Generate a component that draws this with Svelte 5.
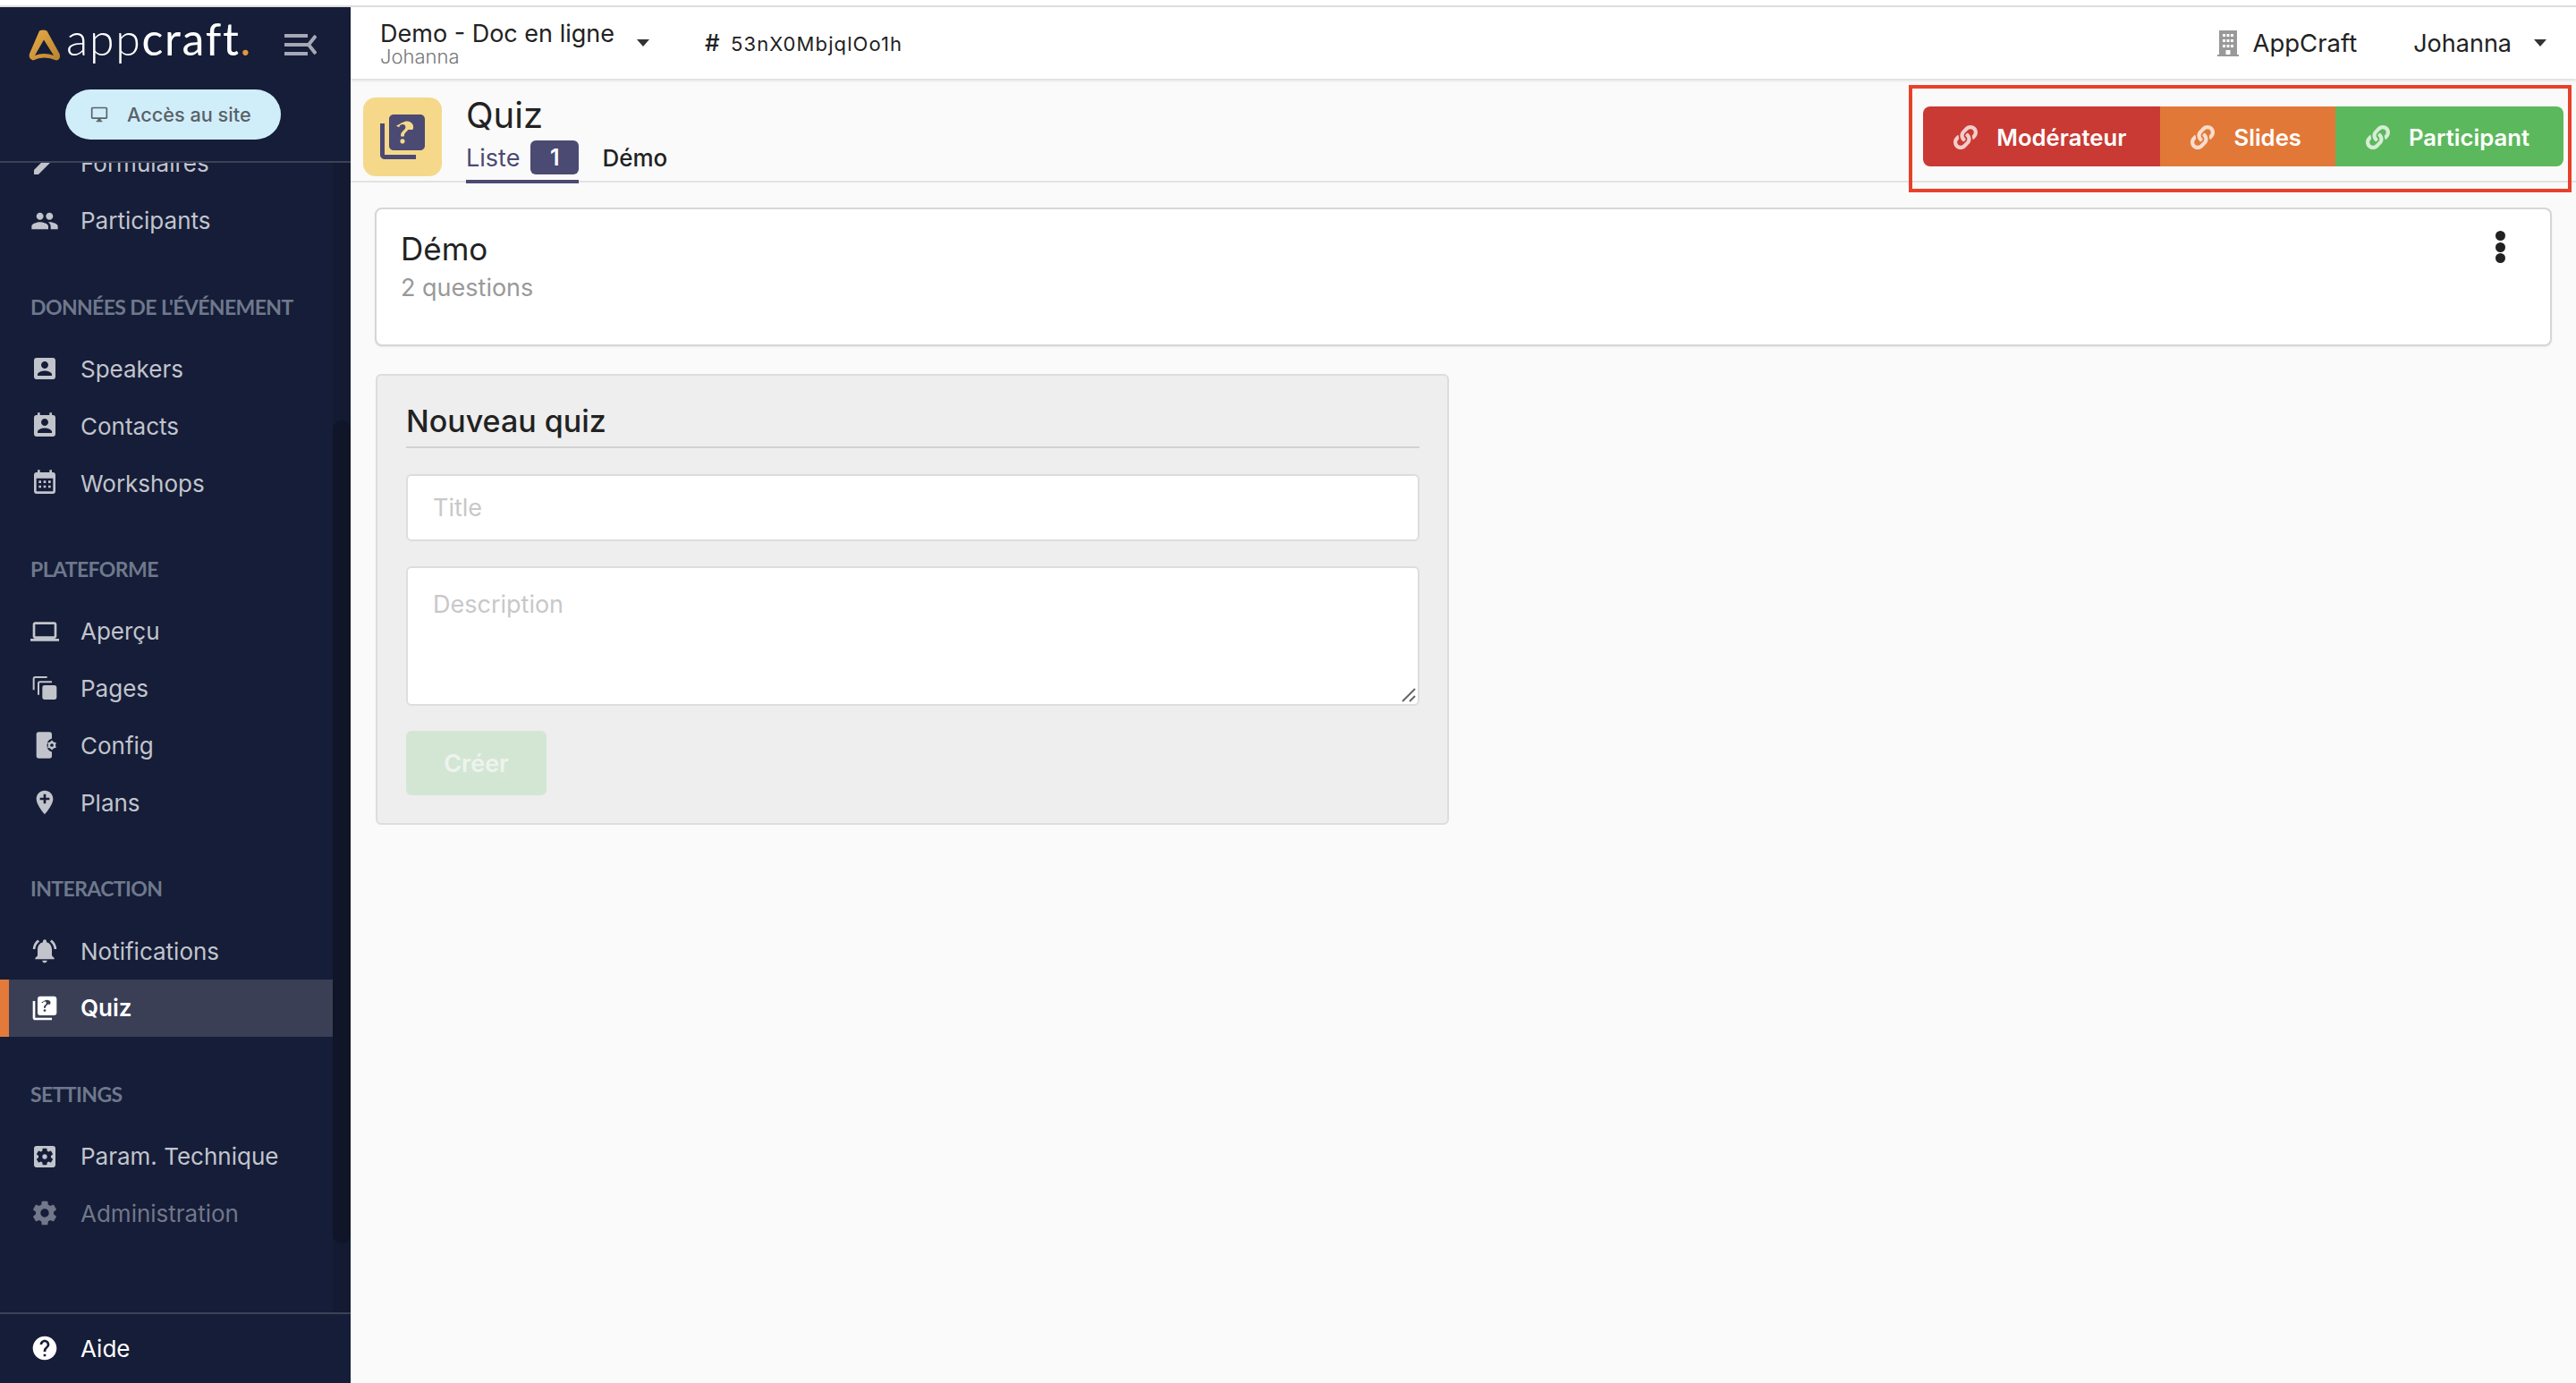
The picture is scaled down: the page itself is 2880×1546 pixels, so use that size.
<script>
  const icons = {
    pencil: 'M3 17.25V21h3.75L17.81 9.94l-3.75-3.75L3 17.25zM20.71 7.04a1 1 0 0 0 0-1.41l-2.34-2.34a1 1 0 0 0-1.41 0l-1.83 1.83 3.75 3.75 1.83-1.83z',
    people: 'M16 11c1.66 0 2.99-1.34 2.99-3S17.66 5 16 5c-1.66 0-3 1.34-3 3s1.34 3 3 3zm-8 0c1.66 0 2.99-1.34 2.99-3S9.66 5 8 5C6.34 5 5 6.34 5 8s1.34 3 3 3zm0 2c-2.33 0-7 1.17-7 3.5V19h14v-2.5c0-2.33-4.67-3.5-7-3.5zm8 0c-.29 0-.62.02-.97.05 1.16.84 1.97 1.97 1.97 3.45V19h6v-2.5c0-2.33-4.67-3.5-7-3.5z',
    box: 'M3 5v14c0 1.1.89 2 2 2h14c1.1 0 2-.9 2-2V5c0-1.1-.9-2-2-2H5c-1.11 0-2 .9-2 2zm12 4c0 1.66-1.34 3-3 3s-3-1.34-3-3 1.34-3 3-3 3 1.34 3 3zm-9 8c0-2 4-3.1 6-3.1s6 1.1 6 3.1v1H6v-1z',
    contact: 'M19 3h-1V1h-2v2H8V1H6v2H5c-1.11 0-2 .9-2 2v14c0 1.1.89 2 2 2h14c1.1 0 2-.9 2-2V5c0-1.1-.9-2-2-2zm-7 3c1.66 0 3 1.34 3 3s-1.34 3-3 3-3-1.34-3-3 1.34-3 3-3zm6 12H6v-1c0-2 4-3.1 6-3.1s6 1.1 6 3.1v1z',
    calendar: 'M19 3h-1V1h-2v2H8V1H6v2H5c-1.11 0-2 .9-2 2v14c0 1.1.89 2 2 2h14c1.1 0 2-.9 2-2V5c0-1.1-.9-2-2-2zm0 16H5V8h14v11zM7 10h2v2H7zm4 0h2v2h-2zm4 0h2v2h-2zm-8 4h2v2H7zm4 0h2v2h-2zm4 0h2v2h-2z',
    laptop: 'M20 18c1.1 0 1.99-.9 1.99-2L22 6c0-1.1-.9-2-2-2H4c-1.1 0-2 .9-2 2v10c0 1.1.9 2 2 2H0v2h24v-2h-4zM4 6h16v10H4V6z',
    pages: 'M2 13V3.5A2 2 0 0 1 4 1.5h10V3H4a.5.5 0 0 0-.5.5V13zM6 17V7.5A2 2 0 0 1 8 5.5h10V7H8a.5.5 0 0 0-.5.5V17zM12 9h8a2 2 0 0 1 2 2v8a2 2 0 0 1-2 2h-8a2 2 0 0 1-2-2v-8a2 2 0 0 1 2-2z',
    config: 'M7 1h9a2 2 0 0 1 2 2v3.3a6 6 0 0 0 0 11.4V21a2 2 0 0 1-2 2H7a2 2 0 0 1-2-2V3a2 2 0 0 1 2-2zM18 7.8L19.5 9.4 21.64 9.9 21 12 21.64 14.1 19.5 14.6 18 16.2 16.5 14.6 14.36 14.1 15 12 14.36 9.9 16.5 9.4zM18 10.6a1.4 1.4 0 1 0 0 2.8 1.4 1.4 0 0 0 0-2.8z',
    pin: 'M12 2C8.14 2 5 5.14 5 9c0 5.25 7 13 7 13s7-7.75 7-13c0-3.86-3.14-7-7-7zm4 8h-3v3h-2v-3H8V8h3V5h2v3h3v2z',
    bell: 'M7.58 4.08L6.15 2.65C3.75 4.48 2.17 7.3 2.03 10.5h2c.15-2.65 1.51-4.97 3.55-6.42zm12.39 6.42h2c-.15-3.2-1.73-6.02-4.12-7.85l-1.42 1.43c2.02 1.45 3.39 3.77 3.54 6.42zM18 11c0-3.07-1.64-5.64-4.5-6.32V4c0-.83-.67-1.5-1.5-1.5s-1.5.67-1.5 1.5v.68C7.63 5.36 6 7.92 6 11v5l-2 2v1h16v-1l-2-2v-5zm-6 11c.14 0 .27-.01.4-.04.65-.14 1.18-.58 1.44-1.18.1-.24.15-.5.15-.78h-4c.01 1.1.9 2 2.01 2z',
    quiz: 'M4 6H2v14c0 1.1.9 2 2 2h14v-2H4V6zm16-4H8c-1.1 0-2 .9-2 2v12c0 1.1.9 2 2 2h12c1.1 0 2-.9 2-2V4c0-1.1-.9-2-2-2zm-7.99 13c-.59 0-1.05-.47-1.05-1.05 0-.59.47-1.04 1.05-1.04.59 0 1.04.45 1.04 1.04-.01.58-.45 1.05-1.04 1.05zm2.5-6.17c-.63.93-1.23 1.21-1.56 1.81-.13.24-.18.4-.18 1.18h-1.52c0-.41-.06-1.08.26-1.65.41-.73 1.18-1.16 1.63-1.8.48-.68.21-1.94-1.14-1.94-.88 0-1.32.67-1.5 1.23l-1.37-.57C11.51 5.96 12.52 5 13.99 5c1.23 0 2.08.56 2.51 1.26.37.61.58 1.73.01 2.57z',
    tech: 'M19 3H5c-1.11 0-2 .89-2 2v14c0 1.11.89 2 2 2h14c1.11 0 2-.89 2-2V5c0-1.11-.89-2-2-2zm-1.75 9c0 .23-.02.46-.05.68l1.48 1.16c.13.11.17.3.08.45l-1.4 2.42c-.09.15-.27.21-.43.15l-1.74-.7c-.36.28-.76.51-1.18.69l-.26 1.85c-.03.17-.18.3-.35.3h-2.8c-.17 0-.32-.13-.35-.29l-.26-1.85c-.43-.18-.82-.41-1.18-.69l-1.74.7c-.16.06-.34 0-.43-.15l-1.4-2.42c-.09-.15-.05-.34.08-.45l1.48-1.16c-.03-.23-.05-.46-.05-.69 0-.23.02-.46.05-.68l-1.48-1.16c-.13-.11-.17-.3-.08-.45l1.4-2.42c.09-.15.27-.21.43-.15l1.74.7c.36-.28.76-.51 1.18-.69l.26-1.85c.03-.17.18-.3.35-.3h2.8c.17 0 .32.13.35.29l.26 1.85c.43.18.82.41 1.18.69l1.74-.7c.16-.06.34 0 .43.15l1.4 2.42c.09.15.05.34-.08.45l-1.48 1.16c.03.23.05.46.05.69zM12 10a2 2 0 1 0 0 4 2 2 0 0 0 0-4z',
    gear: 'M19.43 12.98c.04-.32.07-.64.07-.98s-.03-.66-.07-.98l2.11-1.65c.19-.15.24-.42.12-.64l-2-3.46c-.12-.22-.39-.3-.61-.22l-2.49 1c-.52-.4-1.08-.73-1.69-.98l-.38-2.65C14.46 2.18 14.25 2 14 2h-4c-.25 0-.46.18-.49.42l-.38 2.65c-.61.25-1.17.59-1.69.98l-2.49-1c-.23-.09-.49 0-.61.22l-2 3.46c-.13.22-.07.49.12.64l2.11 1.65c-.04.32-.07.65-.07.98s.03.66.07.98l-2.11 1.65c-.19.15-.24.42-.12.64l2 3.46c.12.22.39.3.61.22l2.49-1c.52.4 1.08.73 1.69.98l.38 2.65c.03.24.24.42.49.42h4c.25 0 .46-.18.49-.42l.38-2.65c.61-.25 1.17-.59 1.69-.98l2.49 1c.23.09.49 0 .61-.22l2-3.46c.12-.22.07-.49-.12-.64l-2.11-1.65zM12 15.5c-1.93 0-3.5-1.57-3.5-3.5s1.57-3.5 3.5-3.5 3.5 1.57 3.5 3.5-1.57 3.5-3.5 3.5z',
    help: 'M12 2C6.48 2 2 6.48 2 12s4.48 10 10 10 10-4.48 10-10S17.52 2 12 2zm1 17h-2v-2h2v2zm2.07-7.75l-.9.92C13.45 12.9 13 13.5 13 15h-2v-.5c0-1.1.45-2.1 1.17-2.83l1.24-1.26c.37-.36.59-.86.59-1.41 0-1.1-.9-2-2-2s-2 .9-2 2H8c0-2.21 1.79-4 4-4s4 1.79 4 4c0 .88-.36 1.68-.93 2.25z'
  };

  const linkPath = 'M326.612 185.391c59.747 59.809 58.927 155.698.36 214.59-.11.12-.24.25-.36.37l-67.2 67.2c-59.27 59.27-155.699 59.262-214.96 0-59.27-59.26-59.27-155.7 0-214.96l37.106-37.106c9.84-9.84 26.786-3.3 27.294 10.606.648 17.722 3.826 35.527 9.69 52.721 1.986 5.822.567 12.262-3.783 16.612l-13.087 13.087c-28.026 28.026-28.905 73.66-1.155 101.96 28.024 28.579 74.086 28.749 102.325.51l67.2-67.19c28.191-28.191 28.073-73.757 0-101.83-3.701-3.694-7.429-6.564-10.341-8.569a16.037 16.037 0 0 1-6.947-12.606c-.396-10.567 3.348-21.456 11.698-29.806l21.054-21.055c5.521-5.521 14.182-6.199 20.584-1.731a152.482 152.482 0 0 1 20.522 17.197zM467.547 44.449c-59.261-59.262-155.69-59.27-214.96 0l-67.2 67.2c-.12.12-.25.25-.36.37-58.566 58.892-59.387 154.781.36 214.59a152.454 152.454 0 0 0 20.521 17.196c6.402 4.468 15.064 3.789 20.584-1.731l21.054-21.055c8.35-8.35 12.094-19.239 11.698-29.806a16.037 16.037 0 0 0-6.947-12.606c-2.912-2.005-6.64-4.875-10.341-8.569-28.073-28.073-28.191-73.639 0-101.83l67.2-67.19c28.239-28.239 74.3-28.069 102.325.51 27.75 28.3 26.872 73.934-1.155 101.96l-13.087 13.087c-4.35 4.35-5.769 10.79-3.783 16.612 5.864 17.194 9.042 34.999 9.69 52.721.509 13.906 17.454 20.446 27.294 10.606l37.106-37.106c59.271-59.259 59.271-155.699.001-214.959z';

  const groups = [
    { items: [{ icon: 'pencil', label: 'Formulaires' }, { icon: 'people', label: 'Participants' }] },
    { title: "Données de l'événement", items: [{ icon: 'box', label: 'Speakers' }, { icon: 'contact', label: 'Contacts' }, { icon: 'calendar', label: 'Workshops' }] },
    { title: 'Plateforme', items: [{ icon: 'laptop', label: 'Aperçu' }, { icon: 'pages', label: 'Pages' }, { icon: 'config', label: 'Config' }, { icon: 'pin', label: 'Plans' }] },
    { title: 'Interaction', items: [{ icon: 'bell', label: 'Notifications' }, { icon: 'quiz', label: 'Quiz', active: true }] },
    { title: 'Settings', items: [{ icon: 'tech', label: 'Param. Technique' }, { icon: 'gear', label: 'Administration', muted: true }] }
  ];

  const links = [
    { label: 'Modérateur', color: 'red' },
    { label: 'Slides', color: 'orange' },
    { label: 'Participant', color: 'green' }
  ];
</script>

<div class="page">
  <aside class="sidebar">
    <div class="side-head">
      <div class="brand">
        <svg class="logo-mark" viewBox="0 0 36 36">
          <defs>
            <linearGradient id="gold" x1="0" y1="0" x2="1" y2="1">
              <stop offset="0" stop-color="#e8ac48" />
              <stop offset="1" stop-color="#b98330" />
            </linearGradient>
          </defs>
          <path fill="url(#gold)" fill-rule="evenodd" d="M12 1.5Q16 -.5 20.5 1.5L34.5 27Q36.5 33 31 34.5Q24 31.5 17.5 31.5Q11 31.5 5 34.5Q-.5 33 1 27zM17 11.5L7 29Q12 27 17.5 27Q23 27 28 29z" />
        </svg>
        <span class="wordmark"><span class="thin">app</span>craft<span class="dot">.</span></span>
        <svg class="collapse" viewBox="0 0 36 24" fill="#a6a8b6">
          <rect y="0" width="26" height="4" />
          <rect y="10" width="26" height="4" />
          <rect y="20" width="26" height="4" />
          <path d="M35 2 L27 12 L35 22" fill="none" stroke="#a6a8b6" stroke-width="4" />
        </svg>
      </div>
      <button class="site-btn">
        <svg viewBox="0 0 24 24"><path d="M21 2H3c-1.1 0-2 .9-2 2v12c0 1.1.9 2 2 2h7v2H8v2h8v-2h-2v-2h7c1.1 0 2-.9 2-2V4c0-1.1-.9-2-2-2zm0 14H3V4h18v12z" /></svg>
        Accès au site
      </button>
    </div>

    <nav class="nav">
      <div class="scroll">
        {#each groups as group}
          <section class="group">
            {#if group.title}<h3>{group.title}</h3>{/if}
            {#each group.items as item}
              <a class="item" class:active={item.active} class:muted={item.muted} href="#/">
                <svg viewBox="0 0 24 24"><path fill-rule="evenodd" d={icons[item.icon]} /></svg>
                <span>{item.label}</span>
              </a>
            {/each}
          </section>
        {/each}
      </div>
      <div class="track"><div class="thumb"></div></div>
    </nav>

    <div class="side-foot">
      <a class="item help" href="#/">
        <svg viewBox="0 0 24 24"><path d={icons.help} /></svg>
        <span>Aide</span>
      </a>
    </div>
  </aside>

  <main class="main">
    <header class="topbar">
      <div class="project">
        <div class="project-name">Demo - Doc en ligne</div>
        <div class="project-owner">Johanna</div>
      </div>
      <span class="caret first"></span>
      <div class="hash"><b>#</b> 53nX0MbjqlOo1h</div>
      <div class="spacer"></div>
      <svg class="building" viewBox="0 0 24 29" fill="#999">
        <path fill-rule="evenodd" d="M2 0h20v27h2v2H0v-2h2zM6 4v3h3V4zm4.5 0v3h3V4zM15 4v3h3V4zM6 10v3h3v-3zm4.5 0v3h3v-3zM15 10v3h3v-3zM6 16v3h3v-3zm4.5 0v3h3v-3zM15 16v3h3v-3zM9.5 22v5h5v-5z" />
      </svg>
      <span class="org">AppCraft</span>
      <span class="user">Johanna</span>
      <span class="caret"></span>
    </header>

    <div class="subhead">
      <div class="tile">
        <svg viewBox="0 0 24 24"><path d={icons.quiz} /></svg>
      </div>
      <div class="heading">
        <h1>Quiz</h1>
        <div class="tabs">
          <div class="tab current">Liste <span class="badge">1</span></div>
          <div class="tab">Démo</div>
        </div>
      </div>
      <div class="links">
        {#each links as link}
          <button class="link {link.color}">
            <svg viewBox="0 0 512 512"><path d={linkPath} /></svg>
            {link.label}
          </button>
        {/each}
      </div>
      <div class="highlight"></div>
    </div>

    <div class="content">
      <div class="card">
        <div>
          <div class="card-title">Démo</div>
          <div class="card-sub">2 questions</div>
        </div>
        <div class="dots"><i></i><i></i><i></i></div>
      </div>

      <form class="new-quiz">
        <h2>Nouveau quiz</h2>
        <input placeholder="Title" />
        <div class="area">
          <textarea placeholder="Description"></textarea>
          <svg class="grip" viewBox="0 0 16 16" stroke="#666" stroke-width="2" fill="none">
            <path d="M1 15 15 1M9 15l6-6" />
          </svg>
        </div>
        <button type="button" disabled>Créer</button>
      </form>
    </div>
  </main>
</div>

<style>
  :global(body) {
    margin: 0;
    background: #fff;
  }

  .page {
    display: flex;
    height: 1538px;
    border-top: 2px solid #ddd;
    margin-top: 6px;
    font-family: Inter, "Noto Sans", sans-serif;
    color: #222;
    overflow: hidden;
  }

  .sidebar {
    width: 392px;
    flex: none;
    display: flex;
    flex-direction: column;
    background: #151d38;
    color: #c2c4cc;
  }

  .side-head {
    height: 172px;
    flex: none;
    border-bottom: 2px solid #3b4257;
  }

  .brand {
    display: flex;
    align-items: center;
    height: 62px;
    padding: 12px 38px 0 32px;
  }

  .logo-mark {
    width: 36px;
    height: 36px;
    flex: none;
  }

  .wordmark {
    font-family: Lato, sans-serif;
    font-size: 50px;
    font-weight: 400;
    line-height: 62px;
    color: #fff;
    margin: -16px 0 0 6px;
    letter-spacing: 1.7px;
  }

  .thin {
    font-weight: 300;
  }

  .dot {
    color: #e8963a;
  }

  .collapse {
    width: 36px;
    height: 24px;
    margin-left: auto;
    margin-top: -2px;
  }

  .site-btn {
    display: flex;
    align-items: center;
    gap: 21px;
    width: 241px;
    height: 56px;
    margin: 18px 0 0 73px;
    padding: 0 0 0 28px;
    border: none;
    border-radius: 28px;
    background: #d0eefa;
    color: #5a6268;
    font: 500 21.7px Inter, sans-serif;
  }

  .site-btn svg {
    width: 20px;
    height: 20px;
    fill: #5a6268;
  }

  .nav {
    flex: 1;
    position: relative;
    overflow: hidden;
  }

  .scroll {
    margin-top: -31px;
    width: 372px;
  }

  .track {
    position: absolute;
    top: 0;
    right: 0;
    bottom: 0;
    width: 20px;
    background: #131a32;
  }

  .thumb {
    margin-top: 288px;
    height: 920px;
    border-radius: 10px;
    background: #101527;
  }

  .group h3 {
    margin: 48px 0 22px 34px;
    height: 32px;
    font: 700 23px/32px Lato, sans-serif;
    letter-spacing: -0.6px;
    text-transform: uppercase;
    color: #6f788c;
  }

  .group:first-child h3 {
    margin-top: 0;
  }

  .item {
    display: flex;
    align-items: center;
    gap: 24px;
    height: 63.8px;
    padding-left: 34px;
    color: inherit;
    text-decoration: none;
    font-size: 26px;
  }

  .item svg {
    width: 32px;
    height: 32px;
    fill: currentColor;
    flex: none;
  }

  .item.active {
    padding-left: 24px;
    border-left: 10px solid #e47a39;
    background: #3a3f56;
    color: #fff;
    font-weight: 600;
  }

  .item.muted {
    color: #72778a;
  }

  .side-foot {
    flex: none;
    height: 77px;
    border-top: 2px solid #3b4257;
    display: flex;
    align-items: center;
  }

  .item.help {
    color: #fff;
    width: 100%;
  }

  .main {
    flex: 1;
    min-width: 0;
    background: #fafafa;
    display: flex;
    flex-direction: column;
  }

  .topbar {
    height: 80px;
    flex: none;
    display: flex;
    align-items: center;
    padding-left: 33px;
    background: #fff;
    box-shadow: 0 2px 3px rgba(0, 0, 0, 0.12);
    position: relative;
  }

  .project-name {
    font-size: 27px;
    line-height: 30px;
  }

  .project-owner {
    font-size: 22px;
    line-height: 20px;
    font-weight: 300;
    color: #777;
  }

  .caret {
    width: 0;
    height: 0;
    border: 7px solid transparent;
    border-top: 8px solid #333;
    border-bottom: none;
    margin: 0 33px 0 25px;
  }

  .caret.first {
    margin: 0 62px 0 25px;
  }

  .hash {
    font-size: 22px;
    letter-spacing: 1.1px;
    margin-top: -2px;
  }

  .hash b {
    font-weight: 500;
    font-size: 26px;
    margin-right: 4px;
  }

  .spacer {
    flex: 1;
  }

  .building {
    width: 24px;
    height: 29px;
  }

  .org {
    font-size: 27.5px;
    margin: 0 63px 0 15px;
  }

  .user {
    font-size: 27px;
  }

  .subhead {
    position: relative;
    flex: none;
    display: flex;
    align-items: flex-start;
    padding: 21px 14px 0;
    border-bottom: 2px solid #e2e2e2;
    height: 93px;
  }

  .tile {
    width: 88px;
    height: 88px;
    flex: none;
    display: flex;
    align-items: center;
    justify-content: center;
    background: #f5d88a;
    border-radius: 14px;
  }

  .tile svg {
    width: 60px;
    height: 60px;
    fill: #4a4a72;
  }

  .heading {
    margin-left: 27px;
  }

  h1 {
    margin: 0;
    font-size: 40px;
    font-weight: 400;
    line-height: 40px;
    color: #222;
  }

  .tabs {
    display: flex;
    gap: 26px;
    margin-top: 8px;
  }

  .tab {
    display: flex;
    align-items: center;
    height: 38px;
    font-size: 26px;
    font-weight: 500;
    gap: 12px;
  }

  .tab.current {
    color: #4a4a72;
    font-size: 27px;
    font-weight: 400;
    padding-bottom: 6px;
    border-bottom: 4px solid #4a4a72;
  }

  .badge {
    display: flex;
    align-items: center;
    justify-content: center;
    width: 54px;
    height: 38px;
    border-radius: 6px;
    background: #4a4a72;
    color: #fff;
    font-size: 25px;
    font-weight: 600;
  }

  .links {
    display: flex;
    margin: 10px 0 0 auto;
    border-radius: 8px;
    overflow: hidden;
  }

  .link {
    display: flex;
    align-items: center;
    gap: 21px;
    height: 67px;
    padding: 2px 38px 0 34px;
    border: none;
    color: #fff;
    font: 600 25.7px Inter, sans-serif;
  }

  .link svg {
    width: 27px;
    height: 27px;
    fill: rgba(255, 255, 255, 0.75);
  }

  .link.red {
    background: #c93a34;
  }

  .link.orange {
    background: #e27838;
  }

  .link.green {
    background: #5cb85c;
  }

  .highlight {
    position: absolute;
    top: 7px;
    right: 5px;
    width: 733px;
    height: 112px;
    border: 4px solid #e8412a;
  }

  .content {
    padding: 28px 27px;
  }

  .card {
    display: flex;
    justify-content: space-between;
    height: 155px;
    box-sizing: border-box;
    padding: 22px 28px 0 27px;
    background: #fff;
    border: 2px solid #d6d6d6;
    border-radius: 8px;
    box-shadow: 0 1px 2px rgba(0, 0, 0, 0.08);
  }

  .card-title {
    font-size: 35px;
    line-height: 44px;
    color: #222;
  }

  .card-sub {
    font-size: 27px;
    line-height: 44px;
    color: #999;
  }

  .dots {
    display: flex;
    flex-direction: column;
    gap: 1.5px;
    padding-top: 2px;
    margin-right: 22px;
  }

  .dots i {
    width: 11px;
    height: 11px;
    border-radius: 50%;
    background: #222;
  }

  .new-quiz {
    width: 1200px;
    height: 504px;
    box-sizing: border-box;
    margin: 31px 0 0 1px;
    padding: 28px 31px 0 32px;
    background: #eee;
    border: 2px solid #ddd;
    border-radius: 6px;
    display: flex;
    flex-direction: column;
    align-items: stretch;
  }

  h2 {
    margin: 0 0 29px;
    height: 51px;
    border-bottom: 2px solid #d2d2d2;
    font-size: 34px;
    font-weight: 500;
    line-height: 46px;
    color: #222;
  }

  input,
  textarea {
    box-sizing: border-box;
    width: 100%;
    margin: 0;
    padding: 0 28px;
    border: 2px solid #ddd;
    border-radius: 6px;
    background: #fff;
    font: 27px Inter, sans-serif;
    outline: none;
    display: block;
  }

  input {
    height: 75px;
    margin-bottom: 28px;
  }

  .area {
    position: relative;
    margin-bottom: 28px;
  }

  textarea {
    height: 156px;
    padding-top: 24px;
    resize: none;
  }

  .grip {
    position: absolute;
    right: 4px;
    bottom: 4px;
    width: 16px;
    height: 16px;
  }

  input::placeholder,
  textarea::placeholder {
    color: #c8c8c8;
  }

  .new-quiz button {
    align-self: flex-start;
    width: 157px;
    height: 72px;
    border: none;
    border-radius: 6px;
    background: #d3e6d4;
    color: #eef3ee;
    font: 600 27px Inter, sans-serif;
  }
</style>
